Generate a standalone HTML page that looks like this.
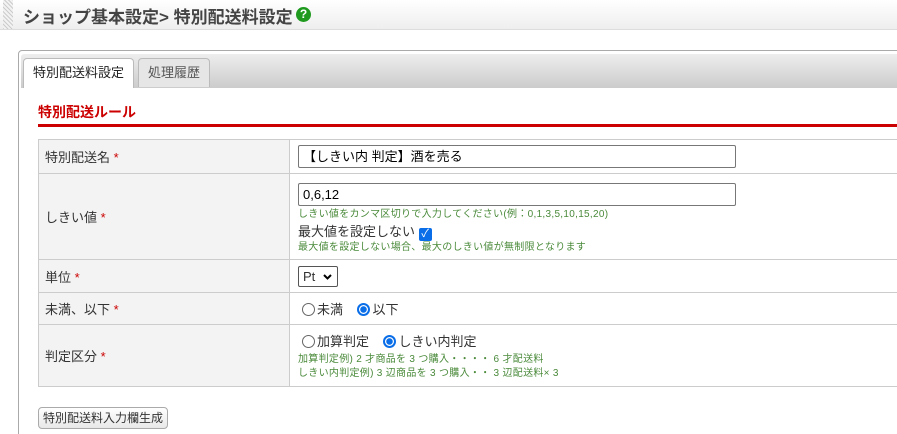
<!DOCTYPE html>
<html><head><meta charset="utf-8"><style>
*{box-sizing:border-box;margin:0;padding:0}
html,body{width:897px;height:434px;overflow:hidden}
body{background:#fff;font-family:"Liberation Sans","Noto Sans CJK JP",sans-serif;font-size:13px;color:#333;position:relative}
.hdr{position:absolute;left:0;top:0;width:897px;height:30px;background:linear-gradient(#fff,#eee);border-bottom:1px solid #ddd}
.stripe{position:absolute;left:3px;top:0;width:10px;height:29px;background:repeating-linear-gradient(45deg,#ccc 0 1px,#f2f2f2 1px 3px)}
.title{position:absolute;left:23px;top:3px;font-size:17px;font-weight:bold;color:#444;white-space:nowrap}
.help{position:absolute;left:296px;top:7px;width:15px;height:15px;border-radius:50%;background:#1f9a1f;color:#fff;font-size:12px;font-weight:bold;text-align:center;line-height:15px}
.panel{position:absolute;left:18px;top:50px;width:900px;height:400px;border:1px solid #aaa;border-radius:4px}
.tabbar{position:absolute;left:21px;top:54px;width:880px;height:34px;background:linear-gradient(#eee,#ccc);border-radius:3px 0 0 0}
.tab{position:absolute;top:58px;height:30px;border:1px solid #bbb;border-bottom:none;border-radius:4px 4px 0 0;text-align:center;line-height:28px;font-size:13px}
.t1{left:23px;width:111px;background:#fff;color:#222}
.t2{left:138px;width:72px;background:#e6e6e6;color:#555;height:29px}
h3{position:absolute;left:38px;top:102px;font-size:14px;color:#c00;font-weight:bold}
.red{position:absolute;left:38px;top:124px;width:870px;height:3px;background:#c00}
table{position:absolute;left:38px;top:139px;width:870px;border-collapse:collapse}
td{border:1px solid #ccc;vertical-align:middle}
td.l{width:251px;background:#f3f3f3;padding-left:6px;font-size:13px;color:#333}
td.r{padding-left:8px}
.req{color:#c00}
.inp{border:1px solid #777;border-radius:2px;height:23px;width:438px;padding-left:4px;line-height:21px;font-size:13px;color:#000}
.note{font-size:10px;color:#4a8a3a;line-height:14px;letter-spacing:0.3px}
.radio{display:inline-block;width:13px;height:13px;border:1px solid #666;border-radius:50%;vertical-align:-2px;margin-right:2px}
.radio.on{border:2px solid #0a6ee8;background:radial-gradient(#0a6ee8 0 3px,#fff 3.5px)}
.btn{position:absolute;left:38px;top:407px;width:130px;height:22px;border:1px solid #aaa;border-radius:4px;background:linear-gradient(#fff,#e8e8e8);font-size:12px;text-align:center;line-height:20px;color:#333}
</style></head><body>
<div class="hdr"><div class="stripe"></div><div class="title">ショップ基本設定&gt; 特別配送料設定</div><div class="help">?</div></div>
<div class="panel"></div>
<div class="tabbar"></div>
<div class="tab t1">特別配送料設定</div>
<div class="tab t2">処理履歴</div>
<h3>特別配送ルール</h3>
<div class="red"></div>
<table>
<tr style="height:34px"><td class="l">特別配送名 <span class="req">*</span></td><td class="r"><div class="inp">【しきい内 判定】酒を売る</div></td></tr>
<tr style="height:86px"><td class="l">しきい値 <span class="req">*</span></td><td class="r" style="padding-top:4px">
<div class="inp">0,6,12</div>
<div class="note" style="margin-top:2px">しきい値をカンマ区切りで入力してください(例：0,1,3,5,10,15,20)</div>
<div style="margin-top:1px;font-size:13px;line-height:17px">最大値を設定しない <span style="display:inline-block;width:13px;height:13px;background:#0a6ee8;border-radius:2px;color:#fff;font-size:11px;line-height:13px;text-align:center;vertical-align:-1px">✓</span></div>
<div class="note">最大値を設定しない場合、最大のしきい値が無制限となります</div></td></tr>
<tr style="height:33px"><td class="l">単位 <span class="req">*</span></td><td class="r"><div style="display:inline-block;border:1px solid #555;border-radius:2px;width:40px;height:21px;line-height:19px;padding-left:4px;font-size:13px;position:relative">Pt<svg style="position:absolute;right:5px;top:7px" width="9" height="6" viewBox="0 0 9 6"><path d="M1 1l3.5 3.5L8 1" stroke="#000" stroke-width="2" fill="none"/></svg></div></td></tr>
<tr style="height:32px"><td class="l">未満、以下 <span class="req">*</span></td><td class="r" style="padding-left:12px"><span class="radio"></span>未満 &nbsp; &nbsp;<span class="radio on"></span>以下</td></tr>
<tr style="height:62px"><td class="l">判定区分 <span class="req">*</span></td><td class="r" style="padding-left:12px"><div><span class="radio"></span>加算判定 &nbsp; &nbsp;<span class="radio on"></span>しきい内判定</div>
<div class="note" style="margin-left:-4px;margin-top:3px">加算判定例) 2 才商品を 3 つ購入・・・・ 6 才配送料</div>
<div class="note" style="margin-left:-4px">しきい内判定例) 3 辺商品を 3 つ購入・・ 3 辺配送料× 3</div></td></tr>
</table>
<div class="btn">特別配送料入力欄生成</div>
</body></html>
